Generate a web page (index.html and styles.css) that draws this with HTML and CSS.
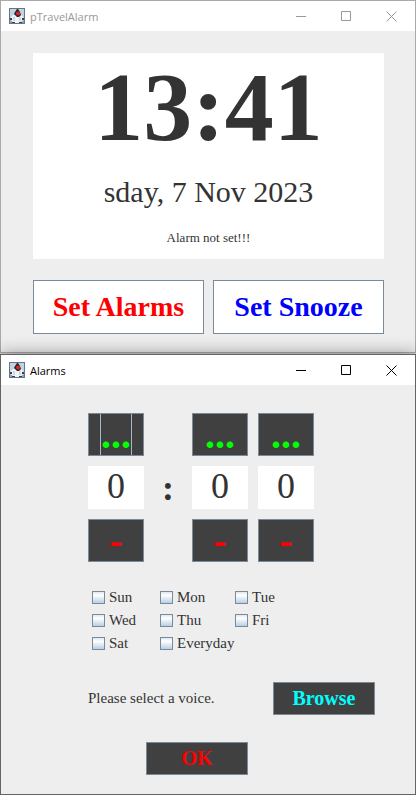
FILE: index.html
```
<!DOCTYPE html>
<html lang="en">
<head>
    <meta charset="UTF-8">
    <meta name="viewport" content="width=device-width, initial-scale=1.0">
    <title>pTravelAlarm</title>
    <link rel="stylesheet" href="styles.css">
</head>
<body>
    <svg class="sprites" aria-hidden="true">
        <symbol id="duke" viewBox="0 0 16 16">
            <rect width="16" height="16" fill="#5f7890"/>
            <rect x="1" y="1" width="14" height="14" fill="#c3d2de"/>
            <path d="M1 12h14v3H1z" fill="#8fa4b5"/>
            <path d="M4 7h2l2 1h3l1-1 2 2 1 3-2 1-1 2H4l-1-2-2-1 1-3z" fill="#f2f3f4"/>
            <path d="M8 1h1l2 3 1 3-2 2H8L5 6l1-2z" fill="#26262a"/>
            <path d="M1 10h2v2H1zM13 10h2v2h-2zM3 14h3v1H3zM10 14h3v1h-3z" fill="#3a4048"/>
            <path d="M5 9v4M11 9v4" stroke="#b5bdc4" fill="none"/>
            <circle cx="9" cy="5.5" r="2" fill="#e32428"/>
        </symbol>
        <symbol id="minimize" viewBox="0 0 11 11">
            <path d="M0 5h10v1H0z" fill="currentColor"/>
        </symbol>
        <symbol id="maximize" viewBox="0 0 11 11">
            <path d="M.5.5h9v9h-9z" fill="none" stroke="currentColor"/>
        </symbol>
        <symbol id="close" viewBox="0 0 11 11">
            <path d="M.5.5l10 10M10.5.5l-10 10" fill="none" stroke="currentColor"/>
        </symbol>
    </svg>

    <div class="window inactive">
        <header class="titlebar">
            <svg class="app-icon"><use href="#duke"/></svg>
            <span class="title">pTravelAlarm</span>
            <button class="control" aria-label="Minimize"><svg><use href="#minimize"/></svg></button>
            <button class="control" aria-label="Maximize"><svg><use href="#maximize"/></svg></button>
            <button class="control" aria-label="Close"><svg><use href="#close"/></svg></button>
        </header>
        <main class="clock">
            <div class="display">
                <div class="time">13:41</div>
                <div class="date">sday, 7 Nov 2023</div>
                <div class="status">Alarm not set!!!</div>
            </div>
            <div class="actions">
                <button class="alarms">Set Alarms</button>
                <button class="snooze">Set Snooze</button>
            </div>
        </main>
    </div>

    <div class="window">
        <header class="titlebar">
            <svg class="app-icon"><use href="#duke"/></svg>
            <span class="title">Alarms</span>
            <button class="control" aria-label="Minimize"><svg><use href="#minimize"/></svg></button>
            <button class="control" aria-label="Maximize"><svg><use href="#maximize"/></svg></button>
            <button class="control" aria-label="Close"><svg><use href="#close"/></svg></button>
        </header>
        <form class="alarm-form">
            <div class="spinners">
                <div class="spinner">
                    <button type="button" class="dark plus" aria-label="Increase hours"><span class="focused">...</span></button>
                    <output>0</output>
                    <button type="button" class="dark minus" aria-label="Decrease hours">-</button>
                </div>
                <span class="colon">:</span>
                <div class="spinner">
                    <button type="button" class="dark plus" aria-label="Increase tens of minutes">...</button>
                    <output>0</output>
                    <button type="button" class="dark minus" aria-label="Decrease tens of minutes">-</button>
                </div>
                <div class="spinner units">
                    <button type="button" class="dark plus" aria-label="Increase minutes">...</button>
                    <output>0</output>
                    <button type="button" class="dark minus" aria-label="Decrease minutes">-</button>
                </div>
            </div>

            <div class="days">
                <label><input type="checkbox">Sun</label>
                <label><input type="checkbox">Mon</label>
                <label><input type="checkbox">Tue</label>
                <label><input type="checkbox">Wed</label>
                <label><input type="checkbox">Thu</label>
                <label><input type="checkbox">Fri</label>
                <label><input type="checkbox">Sat</label>
                <label class="everyday"><input type="checkbox">Everyday</label>
            </div>

            <div class="voice">
                <span>Please select a voice.</span>
                <button type="button" class="dark browse">Browse</button>
            </div>

            <button type="button" class="dark ok">OK</button>
        </form>
    </div>
</body>
</html>
```
FILE: styles.css
```
* {
    box-sizing: border-box;
}
body {
    margin: 0;
    background-color: #d2d2d2;
    color: #333;
    font-family: "Liberation Serif", "Times New Roman", serif;
}
button {
    padding: 0;
    border: 1px solid #7a8a99;
    font-family: inherit;
    font-weight: bold;
}
.sprites {
    display: none;
}

/* window frame */
.window {
    border: 1px solid #646464;
    background-color: #eee;
    box-shadow: 0 0 16px rgba(0, 0, 0, 0.4);
}
.inactive {
    margin-bottom: 1px;
    border-color: #aaa;
    box-shadow: none;
}
.titlebar {
    display: flex;
    align-items: center;
    height: 30px;
    padding: 0 1px 0 8px;
    background-color: #fff;
    color: #000;
    font-family: "Open Sans", "Segoe UI", sans-serif;
    font-size: 11px;
}
.inactive .titlebar {
    color: #999;
}
.app-icon {
    width: 16px;
    height: 16px;
}
.title {
    flex: 1;
    margin-left: 5px;
}
.control {
    display: flex;
    align-items: center;
    justify-content: center;
    width: 45px;
    height: 30px;
    border: none;
    background: none;
    color: inherit;
}
.control svg {
    width: 11px;
    height: 11px;
}

/* clock window */
.clock {
    padding: 22px 31px 18px 32px;
}
.display {
    padding: 4px 0 11px;
    background-color: #fff;
    text-align: center;
}
.time {
    font-size: 98px;
    font-weight: bold;
    line-height: 100px;
}
.date {
    margin: 15px 0 16px;
    font-size: 30px;
    line-height: 40px;
}
.status {
    font-size: 13px;
    line-height: 20px;
}
.actions {
    display: flex;
    gap: 9px;
    margin-top: 21px;
}
.actions button {
    flex: 1;
    height: 54px;
    background-color: #fff;
    font-size: 28px;
}
.actions .alarms {
    color: #f00;
}
.actions .snooze {
    color: #00f;
}

/* alarms window */
.alarm-form {
    padding: 28px 40px 19px 87px;
    font-size: 15px;
}
.dark {
    background-color: #404040;
}
.spinners {
    display: flex;
    align-items: center;
}
.spinner {
    display: flex;
    flex-direction: column;
    gap: 10px;
    width: 56px;
}
.units {
    margin-left: 10px;
}
.spinner button, .spinner output {
    height: 43px;
    font-size: 40px;
    line-height: 41px;
    text-align: center;
}
.spinner output {
    background-color: #fff;
    font-size: 36px;
}
.plus {
    color: #0f0;
}
.minus {
    color: #f00;
}
.focused {
    display: inline-block;
    border: solid #a3b8cc;
    border-width: 0 1px;
}
.colon {
    width: 48px;
    font-size: 36px;
    font-weight: bold;
    text-align: center;
}
.days {
    display: grid;
    grid-template-columns: 68px 75px 1fr;
    margin: 24px 0 27px 4px;
}
.days label {
    display: flex;
    align-items: center;
    height: 23px;
}
.days .everyday {
    grid-column: span 2;
}
.days input {
    appearance: none;
    width: 13px;
    height: 13px;
    margin: 0 4px 0 0;
    border: 1px solid #7a8a99;
    background: linear-gradient(#dde8f3, #fff 30%, #b8cfe5);
}
.voice {
    display: flex;
    align-items: center;
    justify-content: space-between;
}
.browse, .ok {
    width: 102px;
    height: 33px;
    font-size: 20px;
}
.browse {
    color: #0ff;
}
.ok {
    display: block;
    margin: 27px 0 0 58px;
    color: #f00;
}
```
